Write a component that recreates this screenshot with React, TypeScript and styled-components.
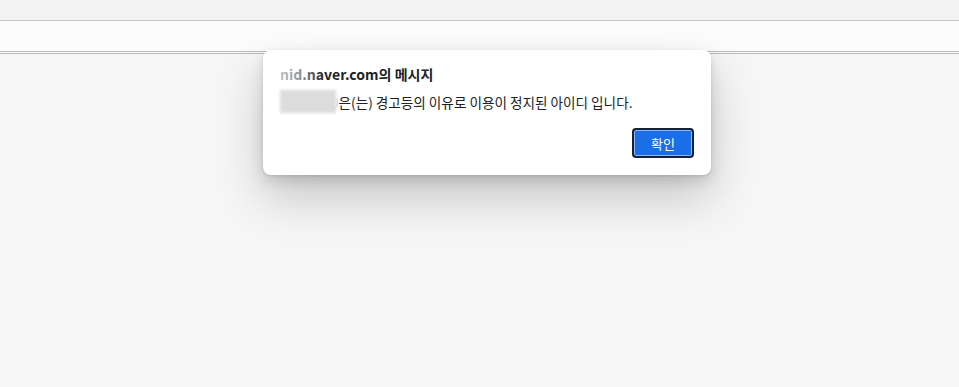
import styled, { createGlobalStyle } from "styled-components";

const GlobalStyle = createGlobalStyle`
  html, body {
    margin: 0;
    padding: 0;
    background: #f6f6f6;
    font-family: "Noto Sans CJK KR", "Noto Sans", "Liberation Sans", sans-serif;
  }
`;

export default function App() {
  return (
    <>
      <GlobalStyle />
      <SPage>
        <STopBar />
        <SAddressBand />
        <SContent />
        <SDialog>
          <STitle>
            nid.naver.com의 메시지
            <STitleFade />
          </STitle>
          <SMessage>
            <SRedacted />
            <SFadedChar>0</SFadedChar>은(는) 경고등의 이유로 이용이 정지된 아이디 입니다.
          </SMessage>
          <SActions>
            <SConfirmButton>확인</SConfirmButton>
          </SActions>
        </SDialog>
      </SPage>
    </>
  );
}

const SPage = styled.div`
  position: relative;
  width: 959px;
  height: 387px;
  display: flex;
  flex-direction: column;
  overflow: hidden;
`;

const STopBar = styled.div`
  height: 20px;
  background: #f3f3f3;
  border-bottom: 1px solid #c6c6c6;
`;

const SAddressBand = styled.div`
  height: 30px;
  background: #fcfcfc;
  border-bottom: 3px double #b9b9b9;
`;

const SContent = styled.div`
  flex: 1;
  background: #f6f6f6;
`;

const SDialog = styled.div`
  position: absolute;
  left: 263px;
  top: 50px;
  width: 448px;
  height: 125px;
  box-sizing: border-box;
  padding: 14px 17px 17px 17px;
  background: #ffffff;
  border-radius: 8px;
  box-shadow: 0 22px 48px rgba(0, 0, 0, 0.2), 0 6px 14px rgba(0, 0, 0, 0.12),
    0 1px 3px rgba(0, 0, 0, 0.1);
  display: flex;
  flex-direction: column;
`;

const STitle = styled.div`
  position: relative;
  font-size: 14px;
  font-weight: 700;
  color: #202124;
  line-height: 20px;
`;

const STitleFade = styled.span`
  position: absolute;
  left: -17px;
  top: -4px;
  width: 62px;
  height: 28px;
  background: linear-gradient(to right, rgba(255, 255, 255, 0.9), rgba(255, 255, 255, 0.5) 60%, rgba(255, 255, 255, 0));
`;

const SMessage = styled.div`
  margin-top: 6px;
  font-size: 13.6px;
  color: #202124;
  line-height: 20px;
  display: flex;
  align-items: center;
`;

const SRedacted = styled.span`
  display: inline-block;
  width: 56px;
  height: 23px;
  background: #dcdcdc;
  filter: blur(1.5px);
`;

const SFadedChar = styled.span`
  color: #d6d6d6;
  margin-left: -5px;
`;

const SActions = styled.div`
  margin-top: auto;
  display: flex;
  justify-content: flex-end;
`;

const SConfirmButton = styled.button`
  width: 62px;
  height: 30px;
  box-sizing: border-box;
  border: 2px solid #14213a;
  border-radius: 4px;
  background: #1a6fe8;
  box-shadow: inset 0 0 0 1px #8fb6f6;
  color: #ffffff;
  font-family: "Noto Sans CJK KR", "Noto Sans", sans-serif;
  font-size: 13px;
  padding: 0;
`;
